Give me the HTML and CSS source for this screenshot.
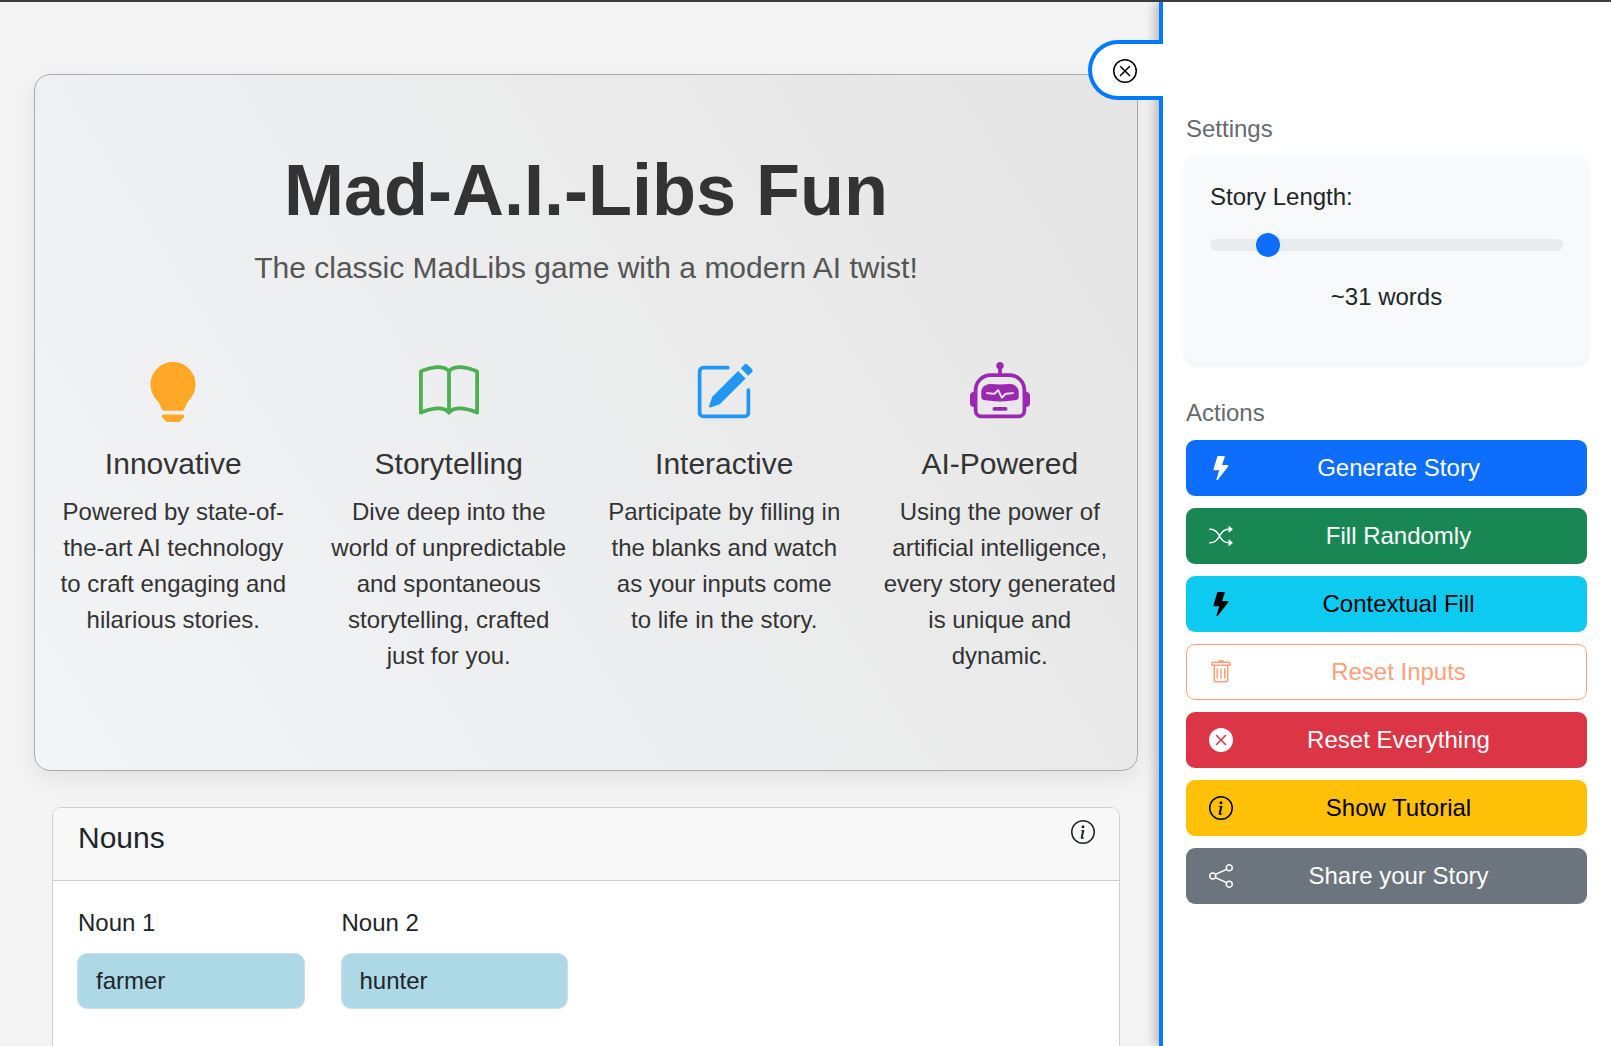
FILE: index.html
```html
<!DOCTYPE html>
<html lang="en">
<head>
<meta charset="utf-8">
<title>Mad-A.I.-Libs Fun</title>
<link rel="stylesheet" href="styles.css">
</head>
<body>
<div class="topbar"></div>
<div class="app">
  <main class="main">
    <section class="hero">
      <h1 class="hero-title">Mad-A.I.-Libs Fun</h1>
      <p class="hero-sub">The classic MadLibs game with a modern AI twist!</p>
      <div class="features">
        <div class="feature">
          <svg class="feature-icon bulb" viewBox="0 0 16 16" fill="currentColor"><path d="M2 6a6 6 0 1 1 10.174 4.31c-.203.196-.359.4-.453.619l-.762 1.769A.5.5 0 0 1 10.5 13h-5a.5.5 0 0 1-.46-.302l-.761-1.77a2 2 0 0 0-.453-.618A5.98 5.98 0 0 1 2 6m3 8.5a.5.5 0 0 1 .5-.5h5a.5.5 0 0 1 0 1l-.224.447a1 1 0 0 1-.894.553H6.618a1 1 0 0 1-.894-.553L5.5 15a.5.5 0 0 1-.5-.5"/></svg>
          <h3 class="feature-title">Innovative</h3>
          <p class="feature-text">Powered by state-of-the-art AI technology to craft engaging and hilarious stories.</p>
        </div>
        <div class="feature">
          <svg class="feature-icon book" viewBox="0 0 16 16" fill="currentColor"><path d="M1 2.828c.885-.37 2.154-.769 3.388-.893 1.33-.134 2.458.063 3.112.752v9.746c-.935-.53-2.12-.603-3.213-.493-1.18.12-2.37.461-3.287.811zm7.5-.141c.654-.689 1.782-.886 3.112-.752 1.234.124 2.503.523 3.388.893v9.923c-.918-.35-2.107-.692-3.287-.81-1.094-.111-2.278-.039-3.213.492zM8 1.783C7.015.936 5.587.81 4.287.94c-1.514.153-3.042.672-3.994 1.105A.5.5 0 0 0 0 2.5v11a.5.5 0 0 0 .707.455c.882-.4 2.303-.881 3.68-1.02 1.409-.142 2.59.087 3.223.877a.5.5 0 0 0 .78 0c.633-.79 1.814-1.019 3.222-.877 1.378.139 2.8.62 3.681 1.02A.5.5 0 0 0 16 13.5v-11a.5.5 0 0 0-.293-.455c-.952-.433-2.48-.952-3.994-1.105C10.413.809 8.985.936 8 1.783"/></svg>
          <h3 class="feature-title">Storytelling</h3>
          <p class="feature-text">Dive deep into the world of unpredictable and spontaneous storytelling, crafted just for you.</p>
        </div>
        <div class="feature">
          <svg class="feature-icon pencil" viewBox="0 0 16 16" fill="currentColor"><path d="M15.502 1.94a.5.5 0 0 1 0 .706L14.459 3.69l-2-2L13.502.646a.5.5 0 0 1 .707 0l1.293 1.293zm-1.75 2.456-2-2L4.939 9.21a.5.5 0 0 0-.121.196l-.805 2.414a.25.25 0 0 0 .316.316l2.414-.805a.5.5 0 0 0 .196-.12l6.813-6.814z"/><path fill-rule="evenodd" d="M1 13.5A1.5 1.5 0 0 0 2.5 15h11a1.5 1.5 0 0 0 1.5-1.5v-6a.5.5 0 0 0-1 0v6a.5.5 0 0 1-.5.5h-11a.5.5 0 0 1-.5-.5v-11a.5.5 0 0 1 .5-.5H9a.5.5 0 0 0 0-1H2.5A1.5 1.5 0 0 0 1 2.5z"/></svg>
          <h3 class="feature-title">Interactive</h3>
          <p class="feature-text">Participate by filling in the blanks and watch as your inputs come to life in the story.</p>
        </div>
        <div class="feature">
          <svg class="feature-icon robot" viewBox="0 0 16 16" fill="currentColor"><path d="M6 12.5a.5.5 0 0 1 .5-.5h3a.5.5 0 0 1 0 1h-3a.5.5 0 0 1-.5-.5M3 8.062C3 6.76 4.235 5.765 5.53 5.886a26.6 26.6 0 0 0 4.94 0C11.765 5.765 13 6.76 13 8.062v1.157a.93.93 0 0 1-.765.935c-.845.147-2.34.346-4.235.346s-3.39-.2-4.235-.346A.93.93 0 0 1 3 9.219zm4.542-.827a.25.25 0 0 0-.217.068l-.92.9a25 25 0 0 1-1.871-.183.25.25 0 0 0-.068.495c.55.076 1.232.149 2.02.193a.25.25 0 0 0 .189-.071l.754-.736.847 1.71a.25.25 0 0 0 .404.062l.932-.97a25 25 0 0 0 1.922-.188.25.25 0 0 0-.068-.495c-.538.074-1.207.145-1.98.189a.25.25 0 0 0-.166.076l-.754.785-.842-1.7a.25.25 0 0 0-.182-.135"/><path d="M8.5 1.866a1 1 0 1 0-1 0V3h-2A4.5 4.5 0 0 0 1 7.5V8a1 1 0 0 0-1 1v2a1 1 0 0 0 1 1v1a2 2 0 0 0 2 2h10a2 2 0 0 0 2-2v-1a1 1 0 0 0 1-1V9a1 1 0 0 0-1-1v-.5A4.5 4.5 0 0 0 10.5 3h-2zM14 7.5V13a1 1 0 0 1-1 1H3a1 1 0 0 1-1-1V7.5A3.5 3.5 0 0 1 5.5 4h5A3.5 3.5 0 0 1 14 7.5"/></svg>
          <h3 class="feature-title">AI-Powered</h3>
          <p class="feature-text">Using the power of artificial intelligence, every story generated is unique and dynamic.</p>
        </div>
      </div>
    </section>

    <section class="card">
      <header class="card-header">
        <h4 class="card-title">Nouns</h4>
        <svg class="icon" viewBox="0 0 16 16" fill="currentColor"><path d="M8 15A7 7 0 1 1 8 1a7 7 0 0 1 0 14m0 1A8 8 0 1 0 8 0a8 8 0 0 0 0 16"/><path d="m8.93 6.588-2.29.287-.082.38.45.083c.294.07.352.176.288.469l-.738 3.468c-.194.897.105 1.319.808 1.319.545 0 1.178-.252 1.465-.598l.088-.416c-.2.176-.492.246-.686.246-.275 0-.375-.193-.304-.533zM9 4.5a1 1 0 1 1-2 0 1 1 0 0 1 2 0"/></svg>
      </header>
      <div class="card-body">
        <div class="field">
          <label class="field-label" for="noun1">Noun 1</label>
          <input class="field-input" id="noun1" type="text" value="farmer">
        </div>
        <div class="field">
          <label class="field-label" for="noun2">Noun 2</label>
          <input class="field-input" id="noun2" type="text" value="hunter">
        </div>
      </div>
    </section>
  </main>

  <aside class="sidebar">
    <button class="tab" type="button" aria-label="Close">
      <svg class="icon" viewBox="0 0 16 16" fill="currentColor"><path d="M8 15A7 7 0 1 1 8 1a7 7 0 0 1 0 14m0 1A8 8 0 1 0 8 0a8 8 0 0 0 0 16"/><path d="M4.646 4.646a.5.5 0 0 1 .708 0L8 7.293l2.646-2.647a.5.5 0 0 1 .708.708L8.707 8l2.647 2.646a.5.5 0 0 1-.708.708L8 8.707l-2.646 2.647a.5.5 0 0 1-.708-.708L7.293 8 4.646 5.354a.5.5 0 0 1 0-.708"/></svg>
    </button>

    <h5 class="side-heading">Settings</h5>
    <div class="settings-card">
      <label class="length-label" for="length">Story Length:</label>
      <input class="length-range" id="length" type="range" min="0" max="100" value="14">
      <div class="length-value">~31 words</div>
    </div>

    <h5 class="side-heading actions-heading">Actions</h5>
    <div class="actions">
      <button class="btn btn-primary" type="button">
        <svg class="icon" viewBox="0 0 16 16" fill="currentColor"><path d="M5.52.359A.5.5 0 0 1 6 0h4a.5.5 0 0 1 .474.658L8.694 6H12.5a.5.5 0 0 1 .395.807l-7 9a.5.5 0 0 1-.873-.454L6.823 9.5H3.5a.5.5 0 0 1-.48-.641z"/></svg>
        <span class="btn-label">Generate Story</span>
      </button>
      <button class="btn btn-success" type="button">
        <svg class="icon" viewBox="0 0 16 16" fill="currentColor"><path fill-rule="evenodd" d="M0 3.5A.5.5 0 0 1 .5 3H1c2.202 0 3.827 1.24 4.874 2.418.49.552.865 1.102 1.126 1.532.26-.43.636-.98 1.126-1.532C9.173 4.24 10.798 3 13 3v1c-1.798 0-3.173 1.01-4.126 2.082A9.6 9.6 0 0 0 7.556 8a9.6 9.6 0 0 0 1.317 1.918C9.828 10.99 11.204 12 13 12v1c-2.202 0-3.827-1.24-4.874-2.418A10.6 10.6 0 0 1 7 9.05c-.26.43-.636.98-1.126 1.532C4.827 11.76 3.202 13 1 13H.5a.5.5 0 0 1 0-1H1c1.798 0 3.173-1.01 4.126-2.082A9.6 9.6 0 0 0 6.444 8a9.6 9.6 0 0 0-1.317-1.918C4.172 5.01 2.796 4 1 4H.5a.5.5 0 0 1-.5-.5"/><path d="M13 5.466V1.534a.25.25 0 0 1 .41-.192l2.36 1.966c.12.1.12.284 0 .384l-2.36 1.966a.25.25 0 0 1-.41-.192m0 9v-3.932a.25.25 0 0 1 .41-.192l2.36 1.966c.12.1.12.284 0 .384l-2.36 1.966a.25.25 0 0 1-.41-.192"/></svg>
        <span class="btn-label">Fill Randomly</span>
      </button>
      <button class="btn btn-info" type="button">
        <svg class="icon" viewBox="0 0 16 16" fill="currentColor"><path d="M5.52.359A.5.5 0 0 1 6 0h4a.5.5 0 0 1 .474.658L8.694 6H12.5a.5.5 0 0 1 .395.807l-7 9a.5.5 0 0 1-.873-.454L6.823 9.5H3.5a.5.5 0 0 1-.48-.641z"/></svg>
        <span class="btn-label">Contextual Fill</span>
      </button>
      <button class="btn btn-outline" type="button">
        <svg class="icon" viewBox="0 0 16 16" fill="currentColor"><path d="M5.5 5.5A.5.5 0 0 1 6 6v6a.5.5 0 0 1-1 0V6a.5.5 0 0 1 .5-.5m2.5 0a.5.5 0 0 1 .5.5v6a.5.5 0 0 1-1 0V6a.5.5 0 0 1 .5-.5m3 .5a.5.5 0 0 0-1 0v6a.5.5 0 0 0 1 0z"/><path d="M14.5 3a1 1 0 0 1-1 1H13v9a2 2 0 0 1-2 2H5a2 2 0 0 1-2-2V4h-.5a1 1 0 0 1-1-1V2a1 1 0 0 1 1-1H6a1 1 0 0 1 1-1h2a1 1 0 0 1 1 1h3.5a1 1 0 0 1 1 1zM4.118 4 4 4.059V13a1 1 0 0 0 1 1h6a1 1 0 0 0 1-1V4.059L11.882 4zM2.5 3h11V2h-11z"/></svg>
        <span class="btn-label">Reset Inputs</span>
      </button>
      <button class="btn btn-danger" type="button">
        <svg class="icon" viewBox="0 0 16 16" fill="currentColor"><path d="M16 8A8 8 0 1 1 0 8a8 8 0 0 1 16 0M5.354 4.646a.5.5 0 1 0-.708.708L7.293 8l-2.647 2.646a.5.5 0 0 0 .708.708L8 8.707l2.646 2.647a.5.5 0 0 0 .708-.708L8.707 8l2.647-2.646a.5.5 0 0 0-.708-.708L8 7.293z"/></svg>
        <span class="btn-label">Reset Everything</span>
      </button>
      <button class="btn btn-warning" type="button">
        <svg class="icon" viewBox="0 0 16 16" fill="currentColor"><path d="M8 15A7 7 0 1 1 8 1a7 7 0 0 1 0 14m0 1A8 8 0 1 0 8 0a8 8 0 0 0 0 16"/><path d="m8.93 6.588-2.29.287-.082.38.45.083c.294.07.352.176.288.469l-.738 3.468c-.194.897.105 1.319.808 1.319.545 0 1.178-.252 1.465-.598l.088-.416c-.2.176-.492.246-.686.246-.275 0-.375-.193-.304-.533zM9 4.5a1 1 0 1 1-2 0 1 1 0 0 1 2 0"/></svg>
        <span class="btn-label">Show Tutorial</span>
      </button>
      <button class="btn btn-secondary" type="button">
        <svg class="icon" viewBox="0 0 16 16" fill="currentColor"><path d="M13.5 1a1.5 1.5 0 1 0 0 3 1.5 1.5 0 0 0 0-3M11 2.5a2.5 2.5 0 1 1 .603 1.628l-6.718 3.12a2.5 2.5 0 0 1 0 1.504l6.718 3.12a2.5 2.5 0 1 1-.488.876l-6.718-3.12a2.5 2.5 0 1 1 0-3.256l6.718-3.12A2.5 2.5 0 0 1 11 2.5m-8.5 4a1.5 1.5 0 1 0 0 3 1.5 1.5 0 0 0 0-3m11 5.5a1.5 1.5 0 1 0 0 3 1.5 1.5 0 0 0 0-3"/></svg>
        <span class="btn-label">Share your Story</span>
      </button>
    </div>
  </aside>
</div>
</body>
</html>
```

FILE: styles.css
```css
* { box-sizing: border-box; }

html, body {
  margin: 0;
  height: 100%;
  overflow: hidden;
}

body {
  font-family: "Liberation Sans", Arial, sans-serif;
  font-size: 24px;
  line-height: 36px;
  color: #212529;
  background: #f4f4f4;
}

.topbar {
  height: 2px;
  background: #3c3c3c;
}

.app {
  display: flex;
  height: calc(100vh - 2px);
  overflow: hidden;
}

.icon {
  display: block;
  flex: none;
  width: 24px;
  height: 24px;
}

/* Main column */
.main {
  flex: 1;
  min-width: 0;
  padding: 72px 21px 0 34px;
}

.hero {
  padding: 72px 0 96px;
  text-align: center;
  border: 1px solid #aaaaaa;
  border-radius: 16px;
  background: linear-gradient(58deg, #f3f4f6, #e5e5e5);
  box-shadow: 0 8px 24px rgba(0, 0, 0, 0.08);
}

.hero-title {
  margin: 0 0 12px;
  font-size: 72px;
  line-height: 86px;
  font-weight: 700;
  color: #333333;
}

.hero-sub {
  margin: 0 0 72px;
  font-size: 30px;
  line-height: 45px;
  color: #555555;
}

.features {
  display: grid;
  grid-template-columns: repeat(4, 1fr);
  margin: 0 -0.5px 0 0.5px;
}

.feature {
  padding: 0 18px;
  color: #333333;
}

.feature-icon {
  display: block;
  width: 60px;
  height: 60px;
  margin: 0 auto 24px;
}

.bulb { color: #ffa726; }
.book { color: #4caf50; }
.pencil { color: #2196f3; }
.robot { color: #9c27b0; }

.feature-title {
  margin: 0 0 12px;
  font-size: 30px;
  line-height: 36px;
  font-weight: 400;
}

.feature-text {
  margin: 0;
}

/* Nouns card */
.card {
  margin: 36px 18px 0;
  border: 1px solid #d0d0d0;
  border-radius: 9px;
  background: #ffffff;
  overflow: hidden;
}

.card-header {
  display: flex;
  justify-content: space-between;
  align-items: flex-start;
  padding: 12px 24px 24px 25px;
  background: #f8f8f8;
  border-bottom: 1px solid #cccccc;
}

.card-title {
  margin: 0;
  font-size: 30px;
  line-height: 36px;
  font-weight: 400;
}

.card-body {
  display: flex;
  gap: 36px;
  padding: 24px;
  min-height: 300px;
}

.field {
  width: 227.5px;
}

.field-label {
  display: block;
  margin-bottom: 12px;
  padding-left: 1px;
}

.field-input {
  display: block;
  width: 100%;
  height: 56px;
  padding: 0 18px;
  font: inherit;
  color: #212529;
  background: #add8e6;
  border: 1px solid #cddfe8;
  border-radius: 10px;
  outline: none;
}

/* Sidebar */
.sidebar {
  position: relative;
  flex: none;
  width: 452px;
  padding: 109px 24px 0 24px;
  background: #ffffff;
  border-left: 4px solid #007bff;
  box-shadow: -4px 0 10px rgba(0, 0, 0, 0.25);
}

.tab {
  position: absolute;
  top: 38px;
  left: -75px;
  width: 75px;
  height: 60px;
  padding: 2px 0 0 21px;
  color: #000000;
  background: #ffffff;
  border: 4px solid #007bff;
  border-right: 0;
  border-radius: 30px 0 0 30px;
}

.side-heading {
  margin: 0 0 8px -1px;
  font-size: 24px;
  line-height: 36px;
  font-weight: 400;
  color: #666a6e;
}

.actions-heading {
  margin-top: 32px;
  margin-bottom: 9px;
}

.settings-card {
  margin-left: -1px;
  padding: 24px;
  border-radius: 10px;
  background: #f8f9fa;
  box-shadow: 0 2px 6px rgba(0, 0, 0, 0.08);
}

.length-label {
  display: block;
  margin-bottom: 18px;
}

.length-range {
  display: block;
  width: 100%;
  height: 24px;
  margin: 0 0 22px;
  background: transparent;
  -webkit-appearance: none;
  appearance: none;
}

.length-range::-webkit-slider-runnable-track {
  height: 12px;
  border-radius: 6px;
  background: #e9ecef;
}

.length-range::-webkit-slider-thumb {
  -webkit-appearance: none;
  width: 24px;
  height: 24px;
  margin-top: -6px;
  border-radius: 50%;
  background: #0d6efd;
}

.length-value {
  margin-bottom: 24px;
  text-align: center;
}

.actions {
  display: flex;
  flex-direction: column;
  gap: 12px;
  margin-left: -1px;
}

.btn {
  display: flex;
  align-items: center;
  height: 56px;
  padding: 0 22px;
  font: inherit;
  border: 1px solid transparent;
  border-radius: 9px;
}

.btn-label {
  flex: 1;
  text-align: center;
}

.btn-primary { color: #ffffff; background: #0d6efd; }
.btn-success { color: #ffffff; background: #198754; }
.btn-info { color: #000000; background: #0dcaf0; }
.btn-outline { color: #ffa07a; background: #ffffff; border-color: #ffa07a; }
.btn-danger { color: #ffffff; background: #dc3545; }
.btn-warning { color: #000000; background: #ffc107; }
.btn-secondary { color: #ffffff; background: #6c757d; }
```
